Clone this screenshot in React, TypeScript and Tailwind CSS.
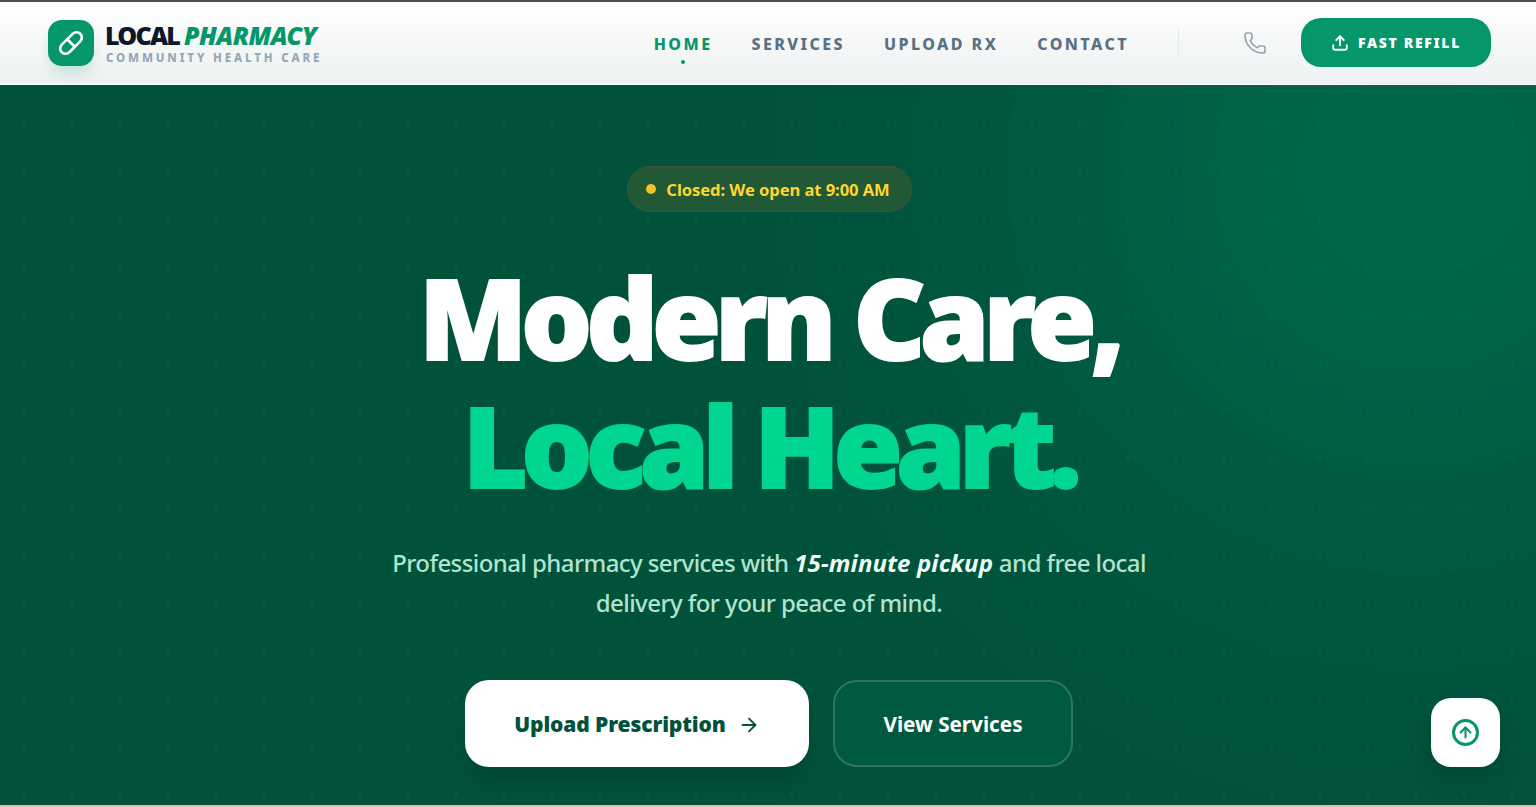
import { ArrowRight, ArrowUp, Phone, Pill, Upload } from "lucide-react";

export default function App() {
  return (
    <div className="relative h-[807px] w-full overflow-hidden bg-[#cfc6b4] font-['Noto_Sans','Open_Sans',sans-serif]">
      <header className="flex h-[85px] items-center justify-between border-t-2 border-b border-t-[#47524e] border-b-white bg-gradient-to-b from-white to-[#edf1f1] pl-12 pr-[45px]">
        <div className="flex items-center gap-3">
          <div className="flex h-[46px] w-[46px] items-center justify-center rounded-[14px] bg-[#059669] shadow-[0_10px_15px_-3px_rgba(5,150,105,0.2)]">
            <Pill className="h-[26px] w-[26px] text-white" strokeWidth={2.4} />
          </div>
          <div className="flex flex-col">
            <div className="-ml-[1px] text-[25px] leading-[24px] font-black tracking-[-0.07em] text-[#0f172a]">
              LOCAL <span className="italic tracking-[-0.02em] text-[#059669]">PHARMACY</span>
            </div>
            <div className="mt-[5px] text-[11.5px] leading-[12px] font-extrabold tracking-[0.25em] text-[#94a9b8]">COMMUNITY HEALTH CARE</div>
          </div>
        </div>
        <div className="flex items-center">
          <nav className="flex items-center gap-[39px] text-[16px] font-extrabold tracking-[0.152em] text-[#5c7083]">
            <a className="relative translate-y-[1px] text-[#059669]">
              HOME
              <span className="absolute -bottom-[8px] left-1/2 h-1 w-1 -translate-x-1/2 rounded-full bg-[#059669]" />
            </a>
            <a className="translate-y-[1px]">SERVICES</a>
            <a className="translate-y-[1px]">UPLOAD RX</a>
            <a className="translate-y-[1px]">CONTACT</a>
          </nav>
          <div className="ml-[49px] h-7 w-px bg-[#e2e8f0]" />
          <Phone className="ml-[64px] h-6 w-6 text-[#94a8b4]" strokeWidth={1.7} />
          <button className="ml-[34px] mb-[1px] flex h-[49px] w-[190px] items-center justify-center gap-[9px] rounded-[20px] bg-[#059669] text-[14px] font-black tracking-[0.12em] text-white">
            <Upload className="h-[18px] w-[18px]" strokeWidth={2.5} />
            FAST REFILL
          </button>
        </div>
      </header>

      <main className="relative h-[720px] overflow-hidden bg-[#00523b]">
        <div className="pointer-events-none absolute inset-0 bg-[radial-gradient(circle_at_1413px_83px,#006549_0px,#006549_90px,#00664a_96px,#00664a_104px,#006448_112px,#006448_155px,#006448_161px,#006247_170px,#005e45_298px,#005b43_308px,#005a42_400px,#00573f_408px,#00523b_640px)]" />
        <div className="pointer-events-none absolute inset-0 bg-[radial-gradient(circle,rgba(52,211,153,0.16)_1px,transparent_1.2px)] bg-[length:48px_48px] bg-[position:0px_13px]" />
        <div className="relative flex flex-col items-center pt-[81px] pl-[2px]">
          <div className="flex h-[46px] w-[285px] items-center justify-center gap-[10px] rounded-full border border-[#4b4f3a] bg-[#215835] text-[16.6px] font-bold tracking-[-0.005em] text-[#ffd52e]">
            <span className="-ml-[2px] h-[10px] w-[10px] rounded-full bg-[#eec52b]" />
            <span className="translate-y-[1px]">Closed: We open at 9:00 AM</span>
          </div>
          <h1 className="mt-[41px] text-center text-[112px] leading-[128px] font-black tracking-[-0.055em] text-white [-webkit-text-stroke:2px_currentColor]">
            Modern Care,
            <br />
            <span className="tracking-[-0.06em] text-[#00d68f]">Local Heart.</span>
          </h1>
          <p className="mt-[34px] w-[800px] text-center text-[24px] leading-[40px] font-medium tracking-[-0.024em] text-[#b2e3cf]">
            Professional pharmacy services with <em className="font-bold tracking-[0.005em] text-[#ecfdf5]">15-minute pickup</em> and free local delivery for your peace of mind.
          </p>
          <div className="mt-[57px] flex gap-6">
            <button className="flex h-[87px] w-[344px] items-center justify-center gap-3 rounded-[24px] bg-white pt-[3px] text-[21px] font-black tracking-[-0.005em] text-[#00523b] shadow-[0_20px_25px_-5px_rgba(0,0,0,0.15)]">
              Upload Prescription
              <ArrowRight className="h-[22px] w-[22px]" strokeWidth={2} />
            </button>
            <button className="flex h-[87px] w-[240px] items-center justify-center rounded-[24px] border-2 border-[#2f7561] bg-[#005a42] pt-[3px] text-[20.7px] font-bold text-white">
              View Services
            </button>
          </div>
        </div>
      </main>

      <button className="absolute bottom-[40px] left-[1431px] flex h-[69px] w-[69px] items-center justify-center rounded-[20px] bg-white shadow-[0_10px_25px_rgba(0,0,0,0.15)]">
        <span className="flex h-[27px] w-[27px] items-center justify-center rounded-full border-[3px] border-[#059669]">
          <ArrowUp className="h-[17px] w-[17px] text-[#059669]" strokeWidth={3} />
        </span>
      </button>
    </div>
  );
}
